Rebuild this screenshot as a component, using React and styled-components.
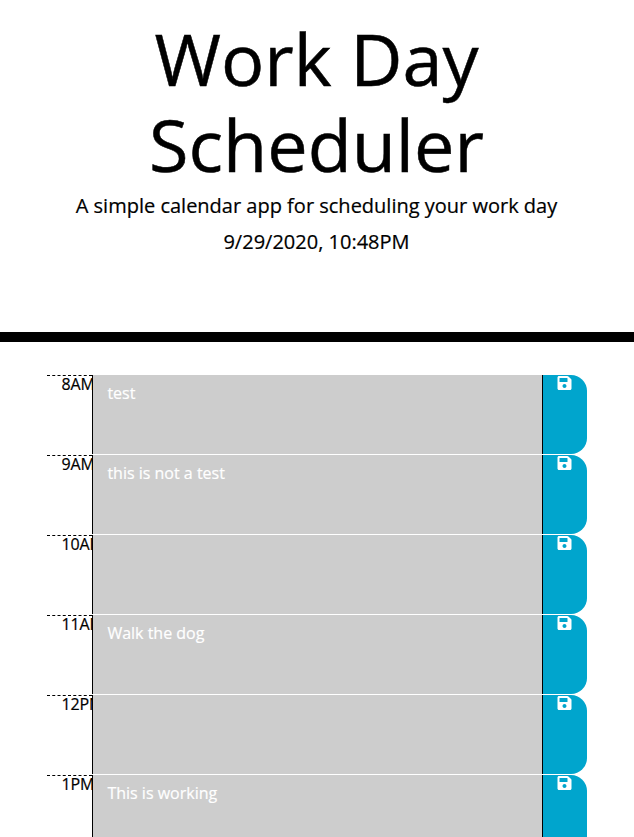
import React from "react";
import styled, { createGlobalStyle } from "styled-components";

const GlobalStyle = createGlobalStyle`
  *, *::before, *::after { box-sizing: border-box; }
  html, body { height: 837px; overflow: hidden; }
  body {
    margin: 0;
    font-family: "Open Sans", sans-serif;
    font-size: 16px;
    line-height: 1.5;
    color: #000;
    background: #fff;
    -webkit-text-stroke: 0.2px currentColor;
  }
`;

const Header = styled.header`
  height: 342px;
  padding: 15px 25px 0 24px;
  text-align: center;
  border-bottom: 10px solid #000;
`;

const Title = styled.h1`
  margin: 0 0 6px;
  font-size: 72px;
  font-weight: 400;
  line-height: 86.4px;
  -webkit-text-stroke-width: 0.5px;
`;

const Lead = styled.p`
  margin: 0;
  font-size: 20px;
  line-height: 24px;
  & + & { margin-top: 12px; }
`;

const Schedule = styled.main`
  width: 540px;
  margin: 33px auto 0;
`;

const TimeBlock = styled.section`
  display: grid;
  grid-template-columns: 45px 451px 44px;
  height: 80px;
`;

const Hour = styled.div`
  padding-left: 14.5px;
  overflow: hidden;
  white-space: nowrap;
  line-height: 16px;
  letter-spacing: -0.1px;
  border-top: 1px dashed #000;
`;

const Task = styled.div`
  height: 79px;
  padding: 6px 14.4px;
  color: #fff;
  background: #cdcdcd;
  border: solid #000;
  border-width: 0 1px;
`;

const SaveButton = styled.button`
  display: flex;
  justify-content: center;
  align-items: flex-start;
  height: 79px;
  padding: 0 1px 0 0;
  border: 0;
  color: #fff;
  background: #00a5cd;
  border-radius: 0 16px 16px 0;
`;

const SaveIcon = () => (
  <svg width="15" height="16" viewBox="0 0 448 512" preserveAspectRatio="xMidYMid meet" fill="currentColor" aria-hidden="true">
    <path d="M433.941 129.941l-83.882-83.882A48 48 0 0 0 316.118 32H48C21.49 32 0 53.49 0 80v352c0 26.51 21.49 48 48 48h352c26.51 0 48-21.49 48-48V163.882a48 48 0 0 0-14.059-33.941zM224 416c-35.346 0-64-28.654-64-64 0-35.346 28.654-64 64-64s64 28.654 64 64c0 35.346-28.654 64-64 64zm96-304.52V212c0 6.627-5.373 12-12 12H76c-6.627 0-12-5.373-12-12V108c0-6.627 5.373-12 12-12h228.52c3.183 0 6.235 1.264 8.485 3.515l3.48 3.48A11.996 11.996 0 0 1 320 111.48z" />
  </svg>
);

const blocks = [
  ["8AM", "test"],
  ["9AM", "this is not a test"],
  ["10AM", ""],
  ["11AM", "Walk the dog"],
  ["12PM", ""],
  ["1PM", "This is working"],
];

export default function App() {
  return (
    <>
      <GlobalStyle />
      <Header>
        <Title>Work Day Scheduler</Title>
        <Lead>A simple calendar app for scheduling your work day</Lead>
        <Lead>9/29/2020, 10:48PM</Lead>
      </Header>
      <Schedule>
        {blocks.map(([hour, task]) => (
          <TimeBlock key={hour}>
            <Hour>{hour}</Hour>
            <Task>{task}</Task>
            <SaveButton aria-label={`Save ${hour}`}>
              <SaveIcon />
            </SaveButton>
          </TimeBlock>
        ))}
      </Schedule>
    </>
  );
}
